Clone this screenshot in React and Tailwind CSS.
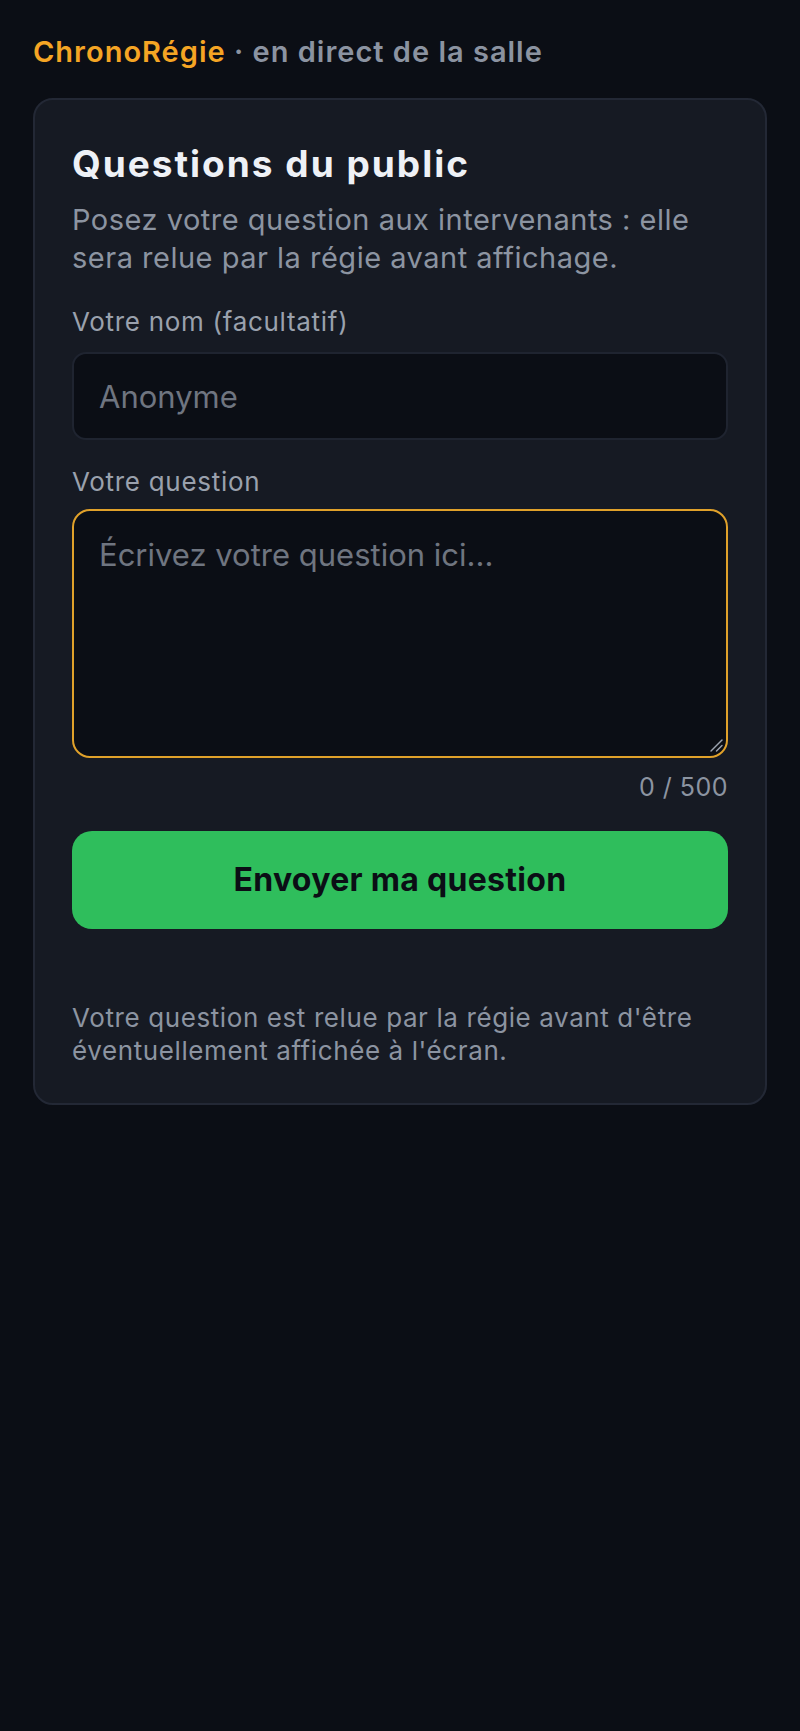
export default function App() {
  return (
    <div
      className="min-h-screen bg-[#0b0e15] px-[33px] pt-[32px] pb-10"
      style={{ fontFamily: "Inter, 'Noto Sans', sans-serif" }}
    >
      <div className="text-[29px] font-semibold leading-[40px] tracking-[1px]">
        <span className="text-[#f5a524]">ChronoRégie</span>
        <span className="text-[#8b93a1]"> · en direct de la salle</span>
      </div>

      <div className="mt-[26px] rounded-[20px] border-2 border-[#232835] bg-[#161a23] px-[37px] pt-[42px] pb-[36px]">
        <h1 className="text-[37px] font-bold leading-[44px] tracking-[2px] text-[#eef1f6]">
          Questions du public
        </h1>
        <p className="mt-[15px] text-[29px] leading-[37.5px] tracking-[0.5px] text-[#8c94a1]">
          Posez votre question aux intervenants : elle sera relue par la régie avant affichage.
        </p>

        <label className="mt-[28px] block text-[26px] leading-[36px] tracking-[0.7px] text-[#9aa1ad]">
          Votre nom (facultatif)
        </label>
        <input
          type="text"
          placeholder="Anonyme"
          className="mt-[12px] block h-[88px] w-full rounded-[14px] border-2 border-[#1f2430] bg-[#0b0e15] px-[25px] text-[31px] text-[#e5e7eb] outline-none placeholder:text-[#6f7580]"
        />

        <label className="mt-[24px] block text-[26px] leading-[36px] tracking-[0.7px] text-[#9aa1ad]">
          Votre question
        </label>
        <div className="relative mt-[9px]">
          <textarea
            placeholder="Écrivez votre question ici..."
            className="block h-[249px] w-full resize-none rounded-[18px] border-2 border-[#e0a12a] bg-[#0b0e15] px-[25px] py-[23px] text-[31px] leading-[42px] text-[#e5e7eb] outline-none placeholder:text-[#6f7580]"
          />
          <svg
            className="pointer-events-none absolute bottom-[6px] right-[5px] h-[13px] w-[13px]"
            viewBox="0 0 13 13"
            fill="none"
            stroke="#9ca3af"
            strokeWidth="1.4"
            strokeLinecap="round"
          >
            <line x1="1" y1="12" x2="12" y2="1" />
            <line x1="6.5" y1="12" x2="12" y2="6.5" />
          </svg>
        </div>
        <div className="mt-[13px] text-right text-[25px] leading-[33px] tracking-[0.5px] text-[#8c94a1]">
          0 / 500
        </div>

        <button
          type="button"
          className="mt-[27px] flex h-[98px] w-full items-center justify-center rounded-[20px] bg-[#2fbe5c] text-[32px] font-bold tracking-[0.3px] text-[#0b0e15]"
        >
          Envoyer ma question
        </button>

        <p className="mt-[72px] text-[26px] leading-[33px] tracking-[0.6px] text-[#8c94a1]">
          Votre question est relue par la régie avant d'être éventuellement affichée à l'écran.
        </p>
      </div>
    </div>
  );
}
